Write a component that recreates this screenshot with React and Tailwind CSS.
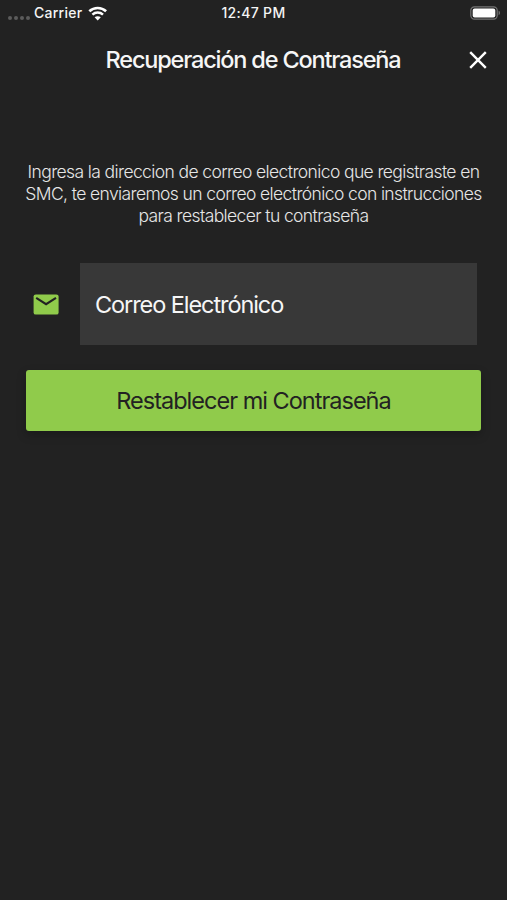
import React, { useState } from 'react';

const StatusBar = () => {
  return (
    <div className="relative flex h-[26px] items-center justify-between pl-2 pr-[6px]">
      <div className="flex items-center">
        {/* No signal dots */}
        <div className="mt-[9px] flex gap-[2px]">
          <span className="h-[4px] w-[4px] rounded-full bg-[#5c5c5c]" />
          <span className="h-[4px] w-[4px] rounded-full bg-[#5c5c5c]" />
          <span className="h-[4px] w-[4px] rounded-full bg-[#5c5c5c]" />
          <span className="h-[4px] w-[4px] rounded-full bg-[#5c5c5c]" />
        </div>
        <span className="ml-[4px] text-[14px] leading-[26px] font-medium tracking-[0.25px] text-[#f4f4f4]">Carrier</span>
        <svg className="ml-[5.5px]" width="20" height="15" viewBox="0 0 20 15" fill="none">
          <path d="M1.3 5.2C6.1 0.9 13.3 0.9 18.1 5.2" stroke="#fff" strokeWidth="2.7" />
          <path d="M4.4 8.6C7.4 5.9 12 5.9 15 8.6" stroke="#fff" strokeWidth="2.5" />
          <path d="M9.7 14.4L6.6 11.3C8.3 9.8 11.1 9.8 12.8 11.3Z" fill="#fff" />
        </svg>
      </div>

      <span className="absolute left-0 w-full text-center text-[14px] leading-[26px] font-medium tracking-[0.35px] text-[#f4f4f4]">
        12:47 PM
      </span>

      <svg width="31" height="14" viewBox="0 0 31 14" fill="none">
        <rect x="0.8" y="0.8" width="26.4" height="12.4" rx="3.6" stroke="#747474" strokeWidth="1.2" />
        <rect x="2.7" y="2.5" width="22.6" height="9" rx="2" fill="#fff" />
        <path d="M28.6 4.8C30.4 5.4 30.4 8.6 28.6 9.2Z" fill="#747474" />
      </svg>
    </div>
  );
};

const App = () => {
  const [email, setEmail] = useState('');

  return (
    <div className="h-[900px] w-full overflow-hidden bg-[#222222] font-['Inter',sans-serif] text-white">
      <StatusBar />

      <header className="flex h-[68px] items-center pl-[40px] pr-[17px]">
        <h1 className="flex-1 pb-px text-center text-[23.5px] leading-[30px] font-medium tracking-[-1.18px] whitespace-nowrap text-[#f6f6f6]">
          Recuperación de Contraseña
        </h1>
        <button type="button" aria-label="Cerrar" className="flex h-[24px] w-[24px] items-center justify-center">
          <svg width="18" height="18" viewBox="0 0 18 18" fill="none">
            <path d="M1.2 1.2L16.8 16.8M16.8 1.2L1.2 16.8" stroke="#fff" strokeWidth="2.4" />
          </svg>
        </button>
      </header>

      <p className="mt-[67px] text-center text-[17.5px] leading-[22px] font-[350] tracking-[-0.61px] whitespace-nowrap text-[#e6e6e6]">
        Ingresa la direccion de correo electronico que registraste en
        <br />
        SMC, te enviaremos un correo electrónico con instrucciones
        <br />
        para restablecer tu contraseña
      </p>

      {/* Email field */}
      <div className="mt-[36px] flex h-[82px] items-center pl-[33px] pr-[30px]">
        <svg width="26" height="21" viewBox="0 0 26 21" fill="none">
          <rect x="0.6" y="0.4" width="25" height="20.2" rx="2.2" fill="#90cb4b" />
          <path d="M3.2 3.9L13.1 10.2L23 3.9" stroke="#222" strokeWidth="2.1" />
        </svg>
        <input
          type="email"
          value={email}
          onChange={(e) => setEmail(e.target.value)}
          placeholder="Correo Electrónico"
          className="ml-[21px] h-full min-w-0 flex-1 bg-[#383838] px-[15px] pt-px text-[23.5px] tracking-[-1.08px] text-white outline-none placeholder:text-[#f6f6f6]"
        />
      </div>

      <button
        type="button"
        className="mt-[25px] ml-[26px] block h-[61px] w-[455px] rounded-[3px] bg-[#90cb4b] text-[23.5px] tracking-[-0.99px] text-[#222222] shadow-[0_4px_10px_rgba(0,0,0,0.25)]"
      >
        Restablecer mi Contraseña
      </button>
    </div>
  );
};

export default App;
